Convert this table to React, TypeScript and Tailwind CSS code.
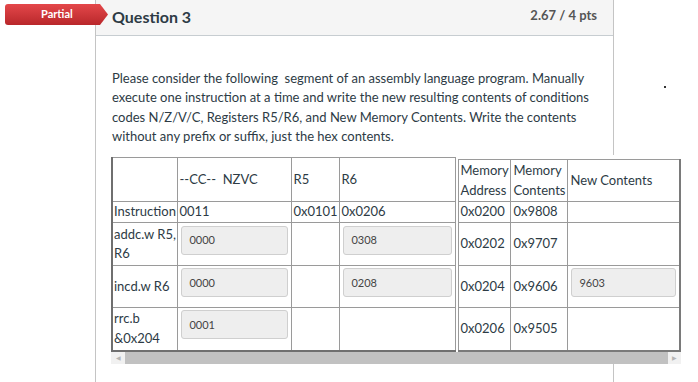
import React from 'react';

const leftRows = [
  { label: 'Instruction', cc: '0011', r5: '0x0101', r6: '0x0206', h: 'h-[21px]' },
  { label: 'addc.w R5, R6', cc: { v: '0000' }, r5: '', r6: { v: '0308' }, h: 'h-[43px]' },
  { label: 'incd.w R6', cc: { v: '0000' }, r5: '', r6: { v: '0208' }, h: 'h-[42px]' },
  { label: 'rrc.b &0x204', cc: { v: '0001' }, r5: '', r6: '', h: 'h-[43px]' },
];

const memRows = [
  { addr: '0x0200', cont: '0x9808', val: '', h: 'h-[21px]' },
  { addr: '0x0202', cont: '0x9707', val: '', h: 'h-[43px]' },
  { addr: '0x0204', cont: '0x9606', val: '9603', h: 'h-[42px]' },
  { addr: '0x0206', cont: '0x9505', val: '', h: 'h-[43px]' },
];

type Cell = string | { v: string };

const AnswerBox = ({ value }: { value: string }) => (
  <div className="mt-[2px] mb-[10px] mx-[2px] h-[29px] bg-[#eeeeee] border border-[#cfcfcf] rounded-[3px] px-[7px] flex items-center text-[11px] text-[#444]">
    {value}
  </div>
);

const renderCell = (c: Cell) => (typeof c === 'string' ? c : <AnswerBox value={c.v} />);

const cellCls = 'border border-[#9a9a9a] px-[1px] align-middle leading-[19.5px]';

export default function App() {
  return (
    <div className="relative w-[698px] h-[382px] bg-white overflow-hidden font-['Lato','Open_Sans',sans-serif] text-[#2d3b45]">
      {/* score badge */}
      <div className="absolute left-[5px] top-[4px] z-10 w-[103px] h-[21px] rounded-l-[3px] bg-gradient-to-b from-[#e4474a] to-[#b9272b] [clip-path:polygon(0_0,95px_0,103px_50%,95px_100%,0_100%)] flex items-center pl-[36px] text-[11px] font-bold text-white">
        Partial
      </div>

      <div className="absolute left-[664px] top-[86px] w-[2px] h-[2px] bg-[#333]" />

      <div className="ml-[95px] w-[519px] min-h-[382px] border-x border-[#c4c4c4]">
        <div className="h-[36px] bg-[#f5f5f5] border-b border-[#c7cdd1] flex items-center justify-between pl-[16px] pr-[16px]">
          <span className="text-[16px] font-bold text-[#2d3b45] -mt-[1px]">Question 3</span>
          <span className="text-[13px] font-bold text-[#555] -mt-[4px]">2.67 / 4 pts</span>
        </div>

        <div className="pl-[16px] pt-[33px]">
          <p className="w-[485px] text-[13px] leading-[19.3px] text-[#2d3b45]">
            Please consider the following{'\u00a0'} segment of an assembly language program. Manually execute one
            instruction at a time and write the new resulting contents of conditions codes N/Z/V/C, Registers R5/R6, and
            New Memory Contents. Write the contents without any prefix or suffix, just the hex contents.
          </p>

          <div className="mt-[9px] -ml-[1px] w-[570px] bg-white pt-[2px]">
            <div className="flex items-start">
              <table className="border-collapse table-fixed text-[13px] border-l-2 border-b-2 border-[#6f6f6f]">
                <colgroup>
                  <col className="w-[66px]" />
                  <col className="w-[115px]" />
                  <col className="w-[48px]" />
                  <col className="w-[117px]" />
                </colgroup>
                <tbody>
                  <tr className="h-[44px]">
                    <td className={cellCls}></td>
                    <td className={`${cellCls} whitespace-pre`}>{'--CC--  NZVC'}</td>
                    <td className={cellCls}>R5</td>
                    <td className={cellCls}>R6</td>
                  </tr>
                  {leftRows.map((r) => (
                    <tr key={r.label} className={r.h}>
                      <td className={cellCls}>{r.label}</td>
                      <td className={cellCls}>{renderCell(r.cc)}</td>
                      <td className={cellCls}>{renderCell(r.r5)}</td>
                      <td className={cellCls}>{renderCell(r.r6)}</td>
                    </tr>
                  ))}
                </tbody>
              </table>

              <table className="ml-[2px] mt-[2px] border-collapse table-fixed text-[13px] border-r-2 border-b-2 border-[#7a7a7a]">
                <colgroup>
                  <col className="w-[51px]" />
                  <col className="w-[55px]" />
                  <col className="w-[114px]" />
                </colgroup>
                <tbody>
                  <tr className="h-[42px]">
                    <td className={`${cellCls} px-[2px]`}>Memory Address</td>
                    <td className={`${cellCls} px-[2px]`}>Memory Contents</td>
                    <td className={`${cellCls} px-[2px]`}>New Contents</td>
                  </tr>
                  {memRows.map((r) => (
                    <tr key={r.addr} className={r.h}>
                      <td className={`${cellCls} px-[2px]`}>{r.addr}</td>
                      <td className={`${cellCls} px-[2px]`}>{r.cont}</td>
                      <td className={cellCls}>{r.val ? <AnswerBox value={r.val} /> : null}</td>
                    </tr>
                  ))}
                </tbody>
              </table>
            </div>

            {/* horizontal scrollbar */}
            <div className="flex h-[12px] bg-[#f1f1f1]">
              <div className="w-[14px] flex items-center justify-center text-[6px] text-[#b5b5b5]">◀</div>
              <div className="flex-1 bg-[#c1c1c1]" />
              <div className="w-[13px] flex items-center justify-center text-[6px] text-[#b5b5b5]">▶</div>
            </div>
          </div>
        </div>
      </div>
    </div>
  );
}
